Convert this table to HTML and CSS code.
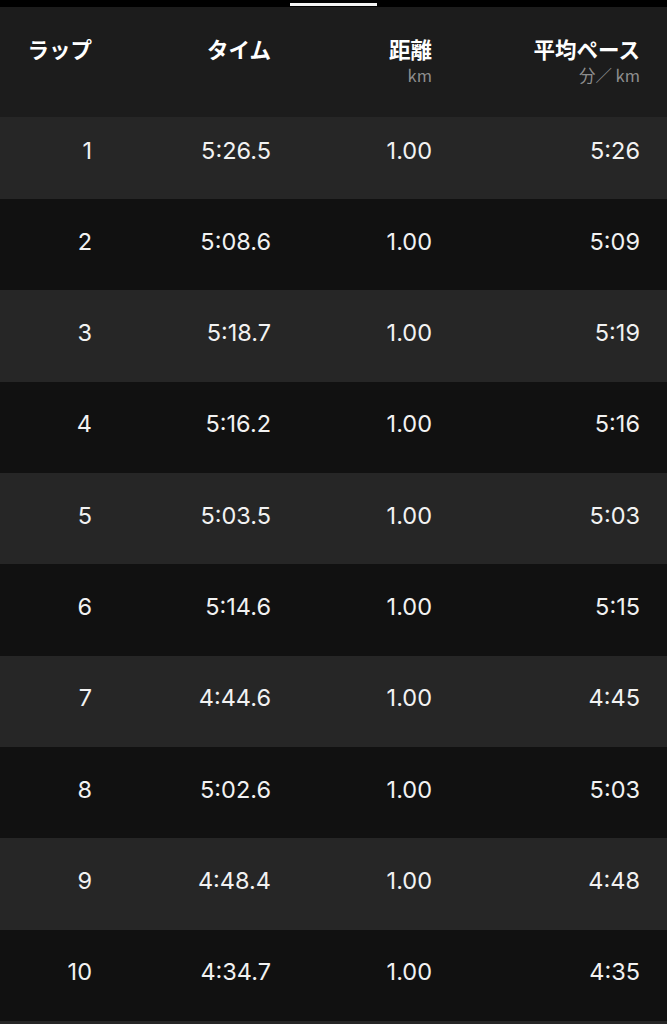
FILE: index.html
```html
<!DOCTYPE html>
<html lang="ja">
<head>
<meta charset="utf-8">
<title>ラップ</title>
<link rel="stylesheet" href="styles.css">
</head>
<body>
<div class="screen">
  <div class="tabbar"><div class="tab-indicator"></div></div>
  <div class="header">
    <div class="hcell"><span class="htitle">ラップ</span></div>
    <div class="hcell"><span class="htitle">タイム</span></div>
    <div class="hcell"><span class="htitle">距離</span><span class="hsub">km</span></div>
    <div class="hcell"><span class="htitle">平均ペース</span><span class="hsub">分／ km</span></div>
  </div>
  <div class="rows">
    <div class="row light first"><span>1</span><span>5:26.5</span><span>1.00</span><span>5:26</span></div>
    <div class="row dark"><span>2</span><span>5:08.6</span><span>1.00</span><span>5:09</span></div>
    <div class="row light"><span>3</span><span>5:18.7</span><span>1.00</span><span>5:19</span></div>
    <div class="row dark"><span>4</span><span>5:16.2</span><span>1.00</span><span>5:16</span></div>
    <div class="row light"><span>5</span><span>5:03.5</span><span>1.00</span><span>5:03</span></div>
    <div class="row dark"><span>6</span><span>5:14.6</span><span>1.00</span><span>5:15</span></div>
    <div class="row light"><span>7</span><span>4:44.6</span><span>1.00</span><span>4:45</span></div>
    <div class="row dark"><span>8</span><span>5:02.6</span><span>1.00</span><span>5:03</span></div>
    <div class="row light"><span>9</span><span>4:48.4</span><span>1.00</span><span>4:48</span></div>
    <div class="row dark"><span>10</span><span>4:34.7</span><span>1.00</span><span>4:35</span></div>
    <div class="next-row light"></div>
  </div>
</div>
</body>
</html>
```
FILE: styles.css
```css
* { box-sizing: border-box; }
html, body {
  margin: 0;
  padding: 0;
  background: #111111;
}
body {
  width: 667px;
  height: 1024px;
  overflow: hidden;
  font-family: "Inter", "Noto Sans CJK JP", sans-serif;
  color: #f2f2f2;
}
.screen {
  display: flex;
  flex-direction: column;
  height: 1024px;
  overflow: hidden;
}
.tabbar {
  flex: none;
  height: 7px;
  background: #000;
  padding-top: 3px;
}
.tab-indicator {
  margin-left: 290px;
  width: 87px;
  height: 3px;
  background: #f4f4f4;
}
.header,
.row {
  display: grid;
  grid-template-columns: 92px 179px 161px 208px;
  padding-right: 27px;
}
.header {
  flex: none;
  height: 110px;
  background: #1c1c1c;
  padding-top: 28px;
  align-items: start;
}
.hcell {
  display: flex;
  flex-direction: column;
  align-items: flex-end;
}
.htitle {
  font-family: "Noto Sans CJK JP", sans-serif;
  font-weight: 700;
  font-size: 21.5px;
  line-height: 28px;
  color: #ffffff;
}
.hsub {
  font-family: "Noto Sans CJK JP", sans-serif;
  font-size: 16.5px;
  line-height: 20px;
  color: #8e8e8e;
  margin-top: 2px;
  white-space: pre;
}
.rows {
  flex: 1;
  display: flex;
  flex-direction: column;
  min-height: 0;
}
.row {
  flex: none;
  height: 91.33px;
  align-items: center;
  padding-bottom: 7px;
  font-size: 23.5px;
  font-weight: 400;
}
.row.first {
  height: 82px;
  padding-bottom: 16px;
}
.row span {
  text-align: right;
}
.next-row {
  flex: 1;
}
.light { background: #262626; }
.dark { background: #111111; }
```
